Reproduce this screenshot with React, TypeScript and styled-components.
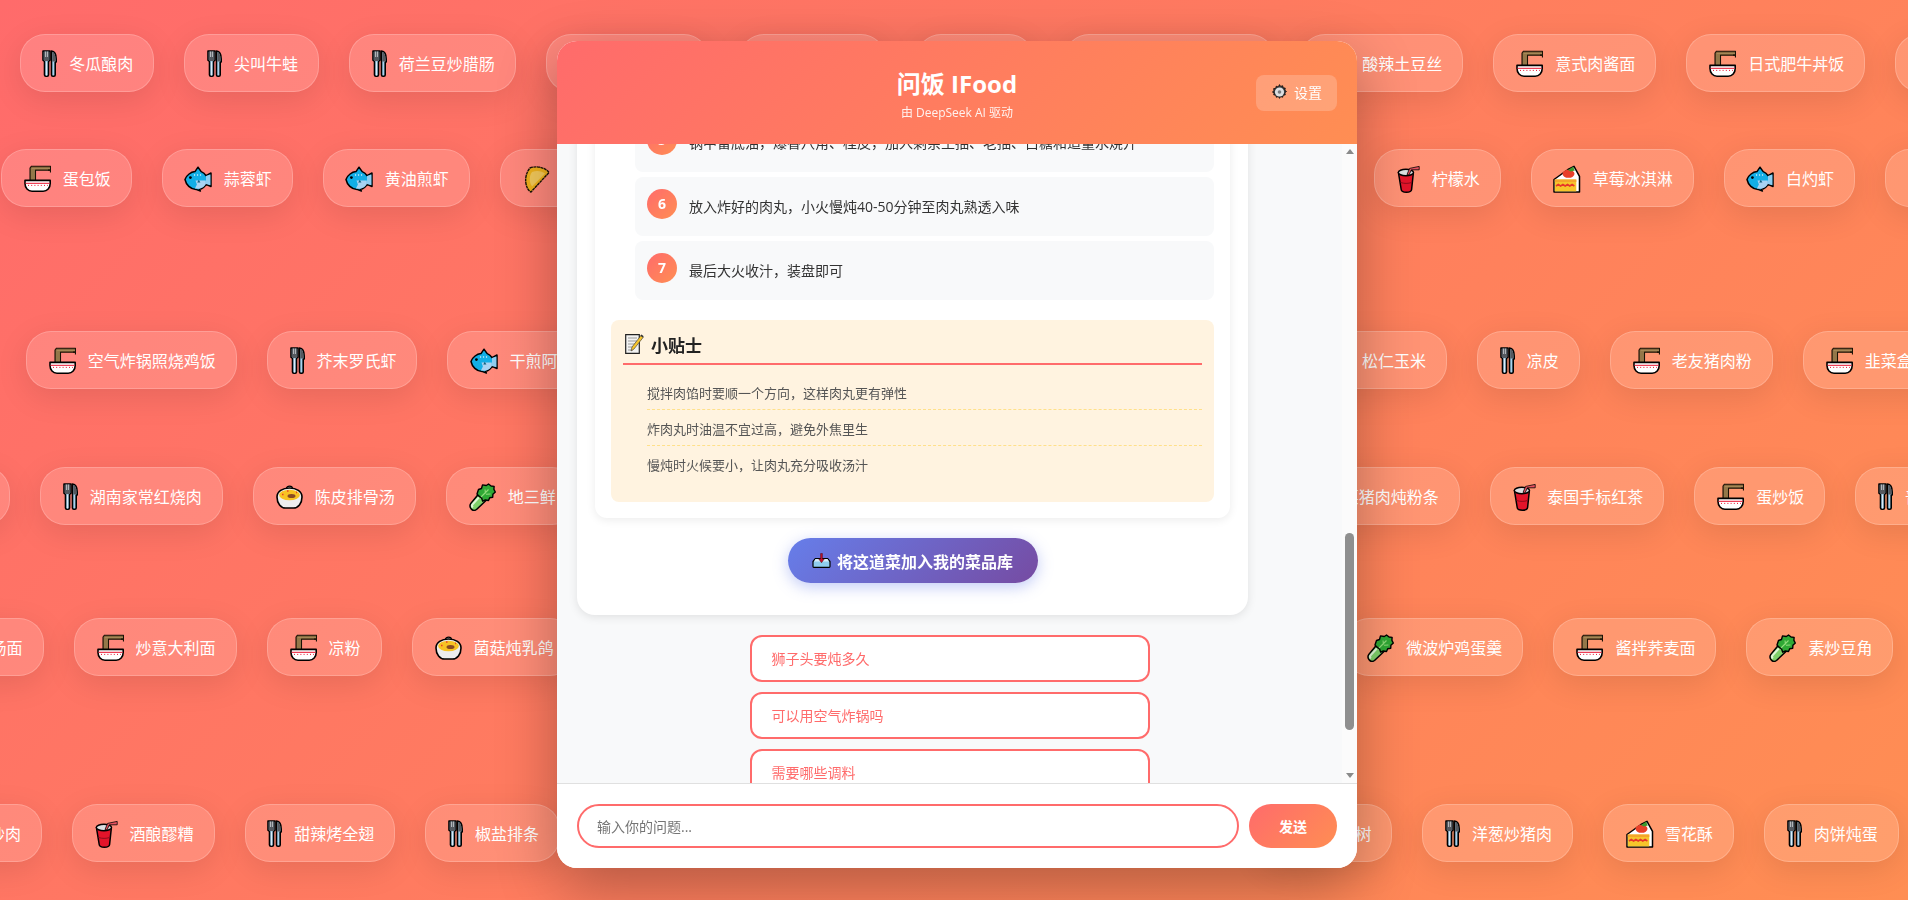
import React from "react";
import styled, { createGlobalStyle } from "styled-components";

const FONT_STACK = `"Open Sans", "Noto Sans CJK SC", sans-serif`;

const GlobalStyle = createGlobalStyle`
  html, body {
    margin: 0;
    padding: 0;
    height: 100%;
    overflow: hidden;
    font-family: ${FONT_STACK};
  }
  * {
    box-sizing: border-box;
  }
`;

type DishKind = "fork" | "bowl" | "fish" | "dumpling" | "cup" | "cake" | "greens" | "pot";

const SLOT_WIDTH: Record<DishKind, number> = {
  fork: 18.7,
  cup: 26.5,
  bowl: 31,
  fish: 31,
  dumpling: 31,
  cake: 31,
  greens: 31,
  pot: 31,
};

const ForkIcon = () => (
  <svg width="15" height="27" viewBox="0 0 15 27">
    <path d="M1 1h7v9.200L6.500 11.500V25a1.300 1.300 0 0 1-1.300 1.200H3.800A1.300 1.300 0 0 1 2.500 25V11.500L1 10.200z" fill="#a5d3ee" stroke="#000" strokeWidth="1.600" strokeLinejoin="round" />
    <path d="M1.800 1.700h5.400v8.200l-1 1H2.800l-1-1z" fill="#55595f" />
    <path d="M3.600 1.500v5.500M5.400 1.500v5.500" stroke="#d5dade" strokeWidth=".8" />
    <path d="M4.500 12v13.500" stroke="#e8f5fc" strokeWidth=".8" />
    <path d="M9.500 1c3 .3 4.700 3.400 4.700 8v3h-1v13a1.300 1.300 0 0 1-1.300 1.200h-1.100A1.300 1.300 0 0 1 9.500 25z" fill="#a5d3ee" stroke="#000" strokeWidth="1.600" strokeLinejoin="round" />
    <path d="M10.300 1.900c2.200.6 3.200 3.400 3.200 7.300v2.300h-3.200z" fill="#55595f" />
  </svg>
);

const BowlIcon = () => (
  <svg width="27" height="27" viewBox="0 0 27 27">
    <path d="M6 15.500V3l1.500-1.800h19v4H11.500v10.300z" fill="#7d6239" stroke="#1a1206" strokeWidth="1.100" strokeLinejoin="round" />
    <path d="M24 5.200h2.500V7.500" fill="none" stroke="#1a1206" strokeWidth="1.200" />
    <path d="M7.500 3.300h18.500" stroke="#b0925e" strokeWidth="1" />
    <path d="M8 3.500v12M10 3.500v12" stroke="#b0925e" strokeWidth=".9" />
    <path d="M1 15.400h25.200v3.200c0 4.400-3 7.600-7 7.600H8c-4 0-7-3.200-7-7.600z" fill="#fff" stroke="#000" strokeWidth="1.600" strokeLinejoin="round" />
    <path d="M1.600 18.300h24" stroke="#e8112d" strokeWidth="1" />
    <path d="M4 20.400h20" stroke="#e8112d" strokeWidth="1" strokeDasharray="1 2.200" />
  </svg>
);

const FishIcon = () => (
  <svg width="28" height="26" viewBox="0 0 28 26">
    <path d="M1 13.500C2.500 9 7 6 11 5.600L14 1.200l3.200 4.400c2.200.8 3.800 2.300 4.800 4L27 7v13.500l-5-2.200c-1.600 2.800-4 4.500-6.500 5L16.400 25l-4.400-1.600C6.500 23.400 2 18.600 1 13.500z" fill="#12aee6" stroke="#000" strokeWidth="1.500" strokeLinejoin="round" />
    <path d="M11.500 14.500h10.300l.1 3.600c-1.600 2.600-3.800 4.200-6.400 4.600l-4.600-.3 2-4z" fill="#a9d3f2" />
    <path d="M22 10v8l4.400 1.300V8.600z" fill="#8fcdf0" />
    <circle cx="6.400" cy="11.600" r="1.400" fill="#000" />
    <path d="M10.500 9h.1M13.500 9h.1M16.500 9h.1" stroke="#dff3fb" strokeWidth="1.300" strokeLinecap="round" />
    <path d="M14.800 13.800l-1.600 2.600h3.200z" fill="#12607f" />
  </svg>
);

const DumplingIcon = () => (
  <svg width="27" height="28" viewBox="0 0 27 28">
    <path d="M7 3C14 .2 23 3 26 7.500L8 27C3 25 -.5 12 7 3z" fill="#eeb01c" stroke="#1a1206" strokeWidth="1.400" strokeLinejoin="round" strokeDasharray="3 .5" />
    <path d="M9 7c5-2 10-1 13 1.500L9 21.500C6 17 6 11 9 7z" fill="#f2c85a" />
  </svg>
);

const CupIcon = () => (
  <svg width="23" height="28" viewBox="0 0 23 28">
    <path d="M1.400 7.500h15L14.600 24.500c-.2 1.800-2.200 2.700-5.200 2.700s-5-.9-5.200-2.700z" fill="#e3142a" stroke="#000" strokeWidth="1.500" strokeLinejoin="round" />
    <ellipse cx="8.900" cy="7.500" rx="7.600" ry="3.200" fill="#dcdfe2" stroke="#000" strokeWidth="1.400" />
    <path d="M3.600 17.500c3.600 1.200 7.400 1.200 11 0" stroke="#8f0c1b" strokeWidth="1" fill="none" />
    <path d="M10 9.500L12.600 3.400l9.600-2v3.400H14.400L12 10z" fill="#e8505f" stroke="#000" strokeWidth=".8" strokeLinejoin="round" />
  </svg>
);

const CakeIcon = () => (
  <svg width="28" height="28" viewBox="0 0 28 28">
    <path d="M1 27V14.500L15 4.500l6-3.200 5.500 10V27z" fill="#fff" stroke="#000" strokeWidth="1.500" strokeLinejoin="round" />
    <path d="M1.800 14.500h21.500V26.400H1.800z" fill="#f6c52b" />
    <path d="M1.800 14.500h21.500v2.500H1.800z" fill="#f4a62a" />
    <path d="M3 21l2.300-1.500 2.300 1.500 2.300-1.500 2.300 1.500 2.300-1.500 2.300 1.500 2.300-1.500 2.300 1.500" fill="none" stroke="#e8352a" strokeWidth="1.500" />
    <ellipse cx="15.500" cy="8.800" rx="6" ry="4" fill="#e8402a" />
    <path d="M15 5l5-3.200 1.800 3.800-4 .8z" fill="#3c9a2c" />
  </svg>
);

const GreensIcon = () => (
  <svg width="27" height="28" viewBox="0 0 27 28">
    <path d="M1.800 20.500L10 10.500l7 7-9.500 9c-1.800 1.300-4 .9-5.200-.5s-1.600-3.900-.5-5.500z" fill="#7fd06a" stroke="#000" strokeWidth="1.500" strokeLinejoin="round" />
    <path d="M3.800 24.500c-1-1-1-2.500 0-3.500l6-6.500" stroke="#dff6d6" strokeWidth="2" fill="none" />
    <path d="M8 11L9.500 6.500l3-1 1-3.600 3.800.6L19.500 1l2.600 2 3 .4-.2 3 1.400 2.600-2.400 2.200-.2 3-3 .6-1.200 2.700-3.200-.5-2.600 1.200-1.200-3.400-2.500-1.600z" fill="#2fa835" stroke="#000" strokeWidth="1.400" strokeLinejoin="round" />
    <path d="M12 14l7.500-7.500M16 6.500l.5 4M21.500 11l-4.500.2" stroke="#8fdc7a" strokeWidth="1.100" fill="none" />
  </svg>
);

const PotIcon = () => (
  <svg width="27" height="24" viewBox="0 0 27 24">
    <path d="M10.500 3.800c0-3.600 6-3.600 6 0" fill="#c4c7ca" stroke="#000" strokeWidth="1.300" />
    <path d="M1 12C1 6.500 6.500 3 13.500 3S26 6.500 26 12c0 6.500-4 11-8.500 11h-8C5 23 1 18.500 1 12z" fill="#ededee" stroke="#000" strokeWidth="1.600" />
    <ellipse cx="13.500" cy="10" rx="10.400" ry="5.200" fill="#f8c323" />
    <ellipse cx="15.500" cy="11" rx="4" ry="2" fill="#8a4a22" />
    <path d="M6 9.500h1.500M11 6h1.500M20 7.500h1" stroke="#e8412c" strokeWidth="1.300" />
  </svg>
);

const GearIcon = () => (
  <svg width="15" height="16" viewBox="0 0 15 16">
    <path d="M7.500.6l1.200 1.800 2-.7.500 2.100 2.100.3-.4 2.100 1.600 1.300-1.600 1.300.4 2.100-2.100.3-.5 2.100-2-.7-1.200 1.800-1.200-1.800-2 .7-.5-2.100-2.100-.3.4-2.100L.4 8l1.600-1.300-.4-2.100 2.100-.3.5-2.100 2 .7z" fill="#3a3c3f" stroke="#000" strokeWidth=".7" strokeLinejoin="round" />
    <circle cx="7.500" cy="8" r="4.600" fill="#dcdee0" />
    <circle cx="7.500" cy="8" r="1.800" fill="#7a7d81" />
  </svg>
);

const MemoIcon = () => (
  <svg width="19" height="20" viewBox="0 0 19 20">
    <path d="M.7.7h13.600v18.600H.7z" fill="#f2f2f2" stroke="#222" strokeWidth="1.200" />
    <path d="M3 4h9M3 7h9M3 10h8M3 13h6M3 16h5" stroke="#9a9a9a" strokeWidth="1" />
    <path d="M6 17l1-4L16 1.500l2.300 1.700L9 15z" fill="#f7c52e" stroke="#333" strokeWidth=".6" />
    <path d="M15.300 1.500l1.200-1 2.200 1.700-1 1.200z" fill="#333" />
  </svg>
);

const TrayIcon = () => (
  <svg width="19" height="15" viewBox="0 0 19 15">
    <path d="M1 13.500V8.500l2.500-3h12l2.500 3v5a.8.8 0 0 1-.8.8H1.800a.8.8 0 0 1-.8-.8z" fill="#8fcdee" stroke="#000" strokeWidth="1.200" strokeLinejoin="round" />
    <path d="M3.500 6h12l1.500 2.400H2z" fill="#d8eefa" />
    <path d="M8.600.5h1.800v5.500h1.800L9.500 9.800 6.800 6h1.800z" fill="#c8102e" stroke="#4a0a12" strokeWidth=".5" />
  </svg>
);

const DISH_ICONS: Record<DishKind, React.FC> = {
  fork: ForkIcon,
  bowl: BowlIcon,
  fish: FishIcon,
  dumpling: DumplingIcon,
  cup: CupIcon,
  cake: CakeIcon,
  greens: GreensIcon,
  pot: PotIcon,
};

const Backdrop = styled.div`
  position: fixed;
  inset: 0;
  overflow: hidden;
  background: linear-gradient(135deg, #ff6b6b 0%, #ff8e53 100%);
`;

const DishRow = styled.div<{ $top: number }>`
  display: flex;
  justify-content: space-between;
  margin-top: ${(p) => p.$top}px;
`;

const DishGroup = styled.div<{ $left?: number; $right?: number }>`
  display: flex;
  flex-shrink: 0;
  gap: 30px;
  margin-left: ${(p) => p.$left ?? 0}px;
  margin-right: ${(p) => p.$right ?? 0}px;
`;

const DishPill = styled.div`
  display: flex;
  align-items: center;
  flex-shrink: 0;
  gap: 10px;
  height: 58px;
  padding: 0 20px;
  border: 1px solid rgba(255, 255, 255, 0.2);
  border-radius: 25px;
  background: rgba(255, 255, 255, 0.15);
  box-shadow: 0 8px 32px rgba(0, 0, 0, 0.1);
  color: #fff;
  font-size: 16px;
  white-space: nowrap;
`;

const DishIconSlot = styled.span<{ $width: number }>`
  display: flex;
  justify-content: center;
  align-items: center;
  width: ${(p) => p.$width}px;
  margin-top: 1px;
`;

const ChatWindow = styled.div`
  position: relative;
  display: flex;
  flex-direction: column;
  width: 800px;
  height: 827px;
  margin: 41px 0 0 557px;
  overflow: hidden;
  border-radius: 20px;
  background: #fff;
  box-shadow: 0 20px 60px rgba(0, 0, 0, 0.3);
`;

const ChatHeader = styled.header`
  display: grid;
  grid-template-columns: 1fr auto 1fr;
  align-items: center;
  flex-shrink: 0;
  height: 103px;
  padding: 0 20px;
  background: linear-gradient(135deg, #ff6b6b 0%, #ff8e53 100%);
  color: #fff;
`;

const TitleBlock = styled.div`
  grid-column: 2;
  padding-top: 2px;
  text-align: center;
`;

const Title = styled.h1`
  margin: 0 0 2px;
  font-size: 24px;
  font-weight: 700;
  line-height: 36px;
`;

const Subtitle = styled.div`
  font-size: 12px;
  line-height: 18px;
  opacity: 0.9;
`;

const SettingsButton = styled.button`
  grid-column: 3;
  justify-self: end;
  display: flex;
  align-items: center;
  gap: 7px;
  width: 81px;
  height: 36px;
  padding: 0 0 2px 16px;
  border: none;
  border-radius: 8px;
  background: rgba(255, 255, 255, 0.2);
  color: #fff;
  font-family: inherit;
  font-size: 14px;
`;

const ChatBody = styled.main`
  display: flex;
  flex: 1;
  min-height: 0;
  background: #f8f9fa;
`;

const Thread = styled.div`
  flex: 1;
  min-width: 0;
  overflow: hidden;
`;

const ThreadInner = styled.div`
  display: flex;
  flex-direction: column;
  margin-top: -65px;
  padding: 0 20px;
`;

const Bubble = styled.div`
  width: 671px;
  padding: 18px 18px 32px;
  border-radius: 18px;
  background: #fff;
  box-shadow: 0 2px 10px rgba(0, 0, 0, 0.1);
`;

const RecipeCard = styled.div`
  padding: 16px;
  border-radius: 12px;
  background: #fff;
  box-shadow: 0 2px 10px rgba(0, 0, 0, 0.08);
`;

const StepList = styled.ol`
  display: flex;
  flex-direction: column;
  gap: 5px;
  margin: 0;
  padding: 0 0 0 24px;
  list-style: none;
`;

const Step = styled.li`
  display: flex;
  align-items: flex-start;
  gap: 12px;
  height: 59px;
  padding: 12px;
  border-radius: 8px;
  background: #f8f9fa;
`;

const StepNumber = styled.span`
  flex-shrink: 0;
  width: 30px;
  height: 30px;
  border-radius: 50%;
  background: linear-gradient(135deg, #ff6b6b 0%, #ff8e53 100%);
  color: #fff;
  font-size: 14px;
  font-weight: 700;
  line-height: 30px;
  text-align: center;
`;

const StepText = styled.span`
  color: #333;
  font-size: 14px;
  line-height: 35px;
`;

const TipBox = styled.section`
  margin-top: 20px;
  height: 182px;
  padding: 10px 12px 12px;
  border-radius: 8px;
  background: #fff3e0;
`;

const TipTitle = styled.h4`
  display: flex;
  align-items: center;
  gap: 7px;
  height: 35px;
  margin: 0 0 9px;
  padding: 0 0 5px 2px;
  border-bottom: 2px solid #ff6b6b;
  color: #222;
  font-size: 17px;
  font-weight: 700;
`;

const TipList = styled.ul`
  margin: 0;
  padding: 0 0 0 24px;
  list-style: none;
`;

const TipItem = styled.li`
  padding: 9px 0 6px;
  border-bottom: 1px dashed #ffe08a;
  color: #555;
  font-size: 13px;
  line-height: 20px;
  &:last-child {
    border-bottom: none;
  }
`;

const AddButton = styled.button`
  display: flex;
  align-items: center;
  justify-content: center;
  gap: 6px;
  width: 250px;
  height: 45px;
  margin: 20px auto 0;
  padding: 0;
  border: none;
  border-radius: 25px;
  background: linear-gradient(135deg, #667eea 0%, #764ba2 100%);
  box-shadow: 0 4px 15px rgba(102, 126, 234, 0.4);
  color: #fff;
  font-family: inherit;
  font-size: 16px;
  font-weight: 700;
`;

const Suggestions = styled.div`
  display: flex;
  flex-direction: column;
  gap: 10px;
  width: 400px;
  margin: 20px auto 0;
`;

const SuggestionButton = styled.button`
  flex-shrink: 0;
  height: 47px;
  padding: 0 20px 1px;
  border: 2px solid #ff6b6b;
  border-radius: 12px;
  background: #fff;
  color: #ff6b6b;
  font-family: inherit;
  font-size: 14px;
  text-align: left;
`;

const ScrollTrack = styled.div`
  display: flex;
  flex-direction: column;
  align-items: center;
  justify-content: space-between;
  flex-shrink: 0;
  width: 15px;
  padding: 5px 0;
  background: #fbfbfb;
`;

const ScrollArrow = styled.span<{ $down?: boolean }>`
  width: 0;
  height: 0;
  border-left: 4px solid transparent;
  border-right: 4px solid transparent;
  ${(p) => (p.$down ? "border-top: 5px solid #8a8a8a;" : "border-bottom: 5px solid #8a8a8a;")}
`;

const ScrollThumb = styled.div`
  width: 9px;
  height: 197px;
  margin-top: 369px;
  margin-bottom: 34px;
  border-radius: 5px;
  background: #8f8f8f;
`;

const Composer = styled.footer`
  display: flex;
  gap: 10px;
  flex-shrink: 0;
  height: 85px;
  padding: 20px;
  border-top: 1px solid #e0e0e0;
  background: #fff;
`;

const QuestionInput = styled.input`
  flex: 1;
  min-width: 0;
  height: 44px;
  padding: 0 18px;
  border: 2px solid #ff6b6b;
  border-radius: 25px;
  outline: none;
  font-family: inherit;
  font-size: 14px;
`;

const SendButton = styled.button`
  width: 88px;
  height: 44px;
  border: none;
  border-radius: 22px;
  background: linear-gradient(135deg, #ff6b6b 0%, #ff8e53 100%);
  color: #fff;
  font-family: inherit;
  font-size: 14px;
  font-weight: 700;
`;

type Dish = [string, DishKind];

const Pill = ({ dish }: { dish: Dish }) => {
  const Icon = DISH_ICONS[dish[1]];
  return (
    <DishPill>
      <DishIconSlot $width={SLOT_WIDTH[dish[1]]}>
        <Icon />
      </DishIconSlot>
      {dish[0]}
    </DishPill>
  );
};

const ROWS: { top: number; left: number; right: number; start: Dish[]; end: Dish[] }[] = [
  {
    top: 34,
    left: 19.6,
    right: -122,
    start: [
      ["冬瓜酿肉", "fork"],
      ["尖叫牛蛙", "fork"],
      ["荷兰豆炒腊肠", "fork"],
      ["番茄炖牛腩", "bowl"],
      ["香菇滑鸡", "bowl"],
      ["口水鸡", "fork"],
      ["广式腊味煲仔拌饭", "bowl"],
    ],
    end: [
      ["酸辣土豆丝", "bowl"],
      ["意式肉酱面", "bowl"],
      ["日式肥牛丼饭", "bowl"],
      ["红油抄手", "fork"],
    ],
  },
  {
    top: 57,
    left: 0.7,
    right: -111.6,
    start: [
      ["蛋包饭", "bowl"],
      ["蒜蓉虾", "fish"],
      ["黄油煎虾", "fish"],
      ["韭菜水饺", "dumpling"],
    ],
    end: [
      ["柠檬水", "cup"],
      ["草莓冰淇淋", "cake"],
      ["白灼虾", "fish"],
      ["回锅肉片", "fork"],
    ],
  },
  {
    top: 124,
    left: 25.7,
    right: -41.7,
    start: [
      ["空气炸锅照烧鸡饭", "bowl"],
      ["芥末罗氏虾", "fork"],
      ["干煎阿根廷红虾", "fish"],
    ],
    end: [
      ["松仁玉米", "greens"],
      ["凉皮", "fork"],
      ["老友猪肉粉", "bowl"],
      ["韭菜盒子", "bowl"],
    ],
  },
  {
    top: 78,
    left: -124.7,
    right: -114,
    start: [
      ["干锅花菜", "fork"],
      ["湖南家常红烧肉", "fork"],
      ["陈皮排骨汤", "pot"],
      ["地三鲜", "greens"],
    ],
    end: [
      ["白菜猪肉炖粉条", "bowl"],
      ["泰国手标红茶", "cup"],
      ["蛋炒饭", "bowl"],
      ["普罗旺斯炖菜", "fork"],
    ],
  },
  {
    top: 93,
    left: -119.5,
    right: 14.6,
    start: [
      ["酸菜鱼汤面", "bowl"],
      ["炒意大利面", "bowl"],
      ["凉粉", "bowl"],
      ["菌菇炖乳鸽", "pot"],
    ],
    end: [
      ["微波炉鸡蛋羹", "greens"],
      ["酱拌荞麦面", "bowl"],
      ["素炒豆角", "greens"],
    ],
  },
  {
    top: 128,
    left: -92.7,
    right: 9.2,
    start: [
      ["青椒炒肉", "fork"],
      ["酒酿醪糟", "cup"],
      ["甜辣烤全翅", "fork"],
      ["椒盐排条", "fork"],
    ],
    end: [
      ["蚂蚁上树", "fork"],
      ["洋葱炒猪肉", "fork"],
      ["雪花酥", "cake"],
      ["肉饼炖蛋", "fork"],
    ],
  },
];

const STEPS = [
  { n: 5, text: "锅中留底油，爆香八角、桂皮，加入剩余生抽、老抽、白糖和适量水烧开" },
  { n: 6, text: "放入炸好的肉丸，小火慢炖40-50分钟至肉丸熟透入味" },
  { n: 7, text: "最后大火收汁，装盘即可" },
];

const TIPS = [
  "搅拌肉馅时要顺一个方向，这样肉丸更有弹性",
  "炸肉丸时油温不宜过高，避免外焦里生",
  "慢炖时火候要小，让肉丸充分吸收汤汁",
];

const SUGGESTIONS = ["狮子头要炖多久", "可以用空气炸锅吗", "需要哪些调料"];

export default function App() {
  return (
    <>
      <GlobalStyle />
      <Backdrop>
        {ROWS.map((row) => (
          <DishRow key={row.start[0][0]} $top={row.top}>
            <DishGroup $left={row.left}>
              {row.start.map((dish) => (
                <Pill key={dish[0]} dish={dish} />
              ))}
            </DishGroup>
            <DishGroup $right={row.right}>
              {row.end.map((dish) => (
                <Pill key={dish[0]} dish={dish} />
              ))}
            </DishGroup>
          </DishRow>
        ))}
      </Backdrop>
      <ChatWindow>
        <ChatHeader>
          <TitleBlock>
            <Title>问饭 IFood</Title>
            <Subtitle>由 DeepSeek AI 驱动</Subtitle>
          </TitleBlock>
          <SettingsButton>
            <GearIcon />
            设置
          </SettingsButton>
        </ChatHeader>
        <ChatBody>
          <Thread>
            <ThreadInner>
              <Bubble>
                <RecipeCard>
                  <StepList>
                    {STEPS.map((step) => (
                      <Step key={step.n}>
                        <StepNumber>{step.n}</StepNumber>
                        <StepText>{step.text}</StepText>
                      </Step>
                    ))}
                  </StepList>
                  <TipBox>
                    <TipTitle>
                      <MemoIcon />
                      小贴士
                    </TipTitle>
                    <TipList>
                      {TIPS.map((tip) => (
                        <TipItem key={tip}>{tip}</TipItem>
                      ))}
                    </TipList>
                  </TipBox>
                </RecipeCard>
                <AddButton>
                  <TrayIcon />
                  将这道菜加入我的菜品库
                </AddButton>
              </Bubble>
              <Suggestions>
                {SUGGESTIONS.map((text) => (
                  <SuggestionButton key={text}>{text}</SuggestionButton>
                ))}
              </Suggestions>
            </ThreadInner>
          </Thread>
          <ScrollTrack>
            <ScrollArrow />
            <ScrollThumb />
            <ScrollArrow $down />
          </ScrollTrack>
        </ChatBody>
        <Composer>
          <QuestionInput placeholder="输入你的问题..." />
          <SendButton>发送</SendButton>
        </Composer>
      </ChatWindow>
    </>
  );
}
